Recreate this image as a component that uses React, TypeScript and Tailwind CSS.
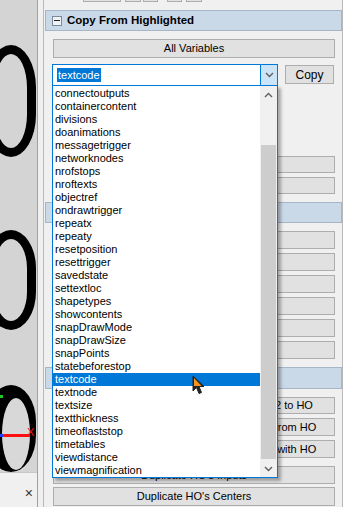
import React from 'react';

const items = [
    'connectoutputs', 'containercontent', 'divisions', 'doanimations', 'messagetrigger',
    'networknodes', 'nrofstops', 'nroftexts', 'objectref', 'ondrawtrigger', 'repeatx',
    'repeaty', 'resetposition', 'resettrigger', 'savedstate', 'settextloc', 'shapetypes',
    'showcontents', 'snapDrawMode', 'snapDrawSize', 'snapPoints', 'statebeforestop',
    'textcode', 'textnode', 'textsize', 'textthickness', 'timeoflaststop', 'timetables',
    'viewdistance', 'viewmagnification',
];

function Btn({ label, className }: { label?: string; className: string }) {
    return (
        <div className={`ml-[9px] mr-[7px] flex items-center justify-center bg-[#e1e1e1] border border-[#adadad] text-black whitespace-nowrap overflow-hidden ${className}`}>
            {label}
        </div>
    );
}

function Header({ title, className }: { title?: string; className: string }) {
    return (
        <div className={`ml-[1px] flex items-center bg-[#cad9e8] border border-[#a7b6c6] ${className}`}>
            <div className="ml-[6px] w-[10px] h-[10px] border border-[#7a8a9a] bg-[#eef3f8] flex items-center justify-center">
                <div className="w-[6px] h-[1px] bg-[#222]" />
            </div>
            {title && <span className="ml-[5px] font-bold text-[11.5px] text-black">{title}</span>}
        </div>
    );
}

function Chevron({ up }: { up?: boolean }) {
    return (
        <svg width="9" height="6" viewBox="0 0 9 6">
            <polyline
                points={up ? '1,5 4.5,1.5 8,5' : '1,1 4.5,4.5 8,1'}
                fill="none"
                stroke="#606060"
                strokeWidth="1.4"
            />
        </svg>
    );
}

export default function App() {
    return (
        <div className="relative w-[343px] h-[507px] overflow-hidden flex bg-[#f0f0f0] font-['Liberation_Sans',Arial,sans-serif] text-[11px]">
            {/* 3d view strip on the left */}
            <div className="w-[38px] flex flex-col border-r border-[#a0a0a0]">
                <div className="relative h-[472px] overflow-hidden bg-[#d4d4d4]">
                    <div className="absolute left-[-14px] top-[45px] w-[50px] h-[112px] border-[9px] border-black rounded-[50%/38%]" />
                    <div className="absolute left-[-14px] top-[230px] w-[50px] h-[100px] border-[9px] border-black rounded-[50%/38%]" />
                    <div className="absolute left-[-14px] top-[385px] w-[50px] h-[87px] bg-black rounded-[50%/42%]" />
                    <div className="absolute left-[2px] top-[398px] w-[28px] h-[72px] bg-[#d8d8d8] rounded-[50%]" />
                    <div className="absolute left-0 top-[395px] w-[3px] h-[3px] bg-[#22cc22]" />
                    <div className="absolute left-0 top-[434px] w-[30px] h-[3px] bg-[#ff1010]" />
                    <div className="absolute left-0 top-[434px] w-[3px] h-[3px] bg-[#2040ff]" />
                    <span className="absolute left-[27px] top-[427px] text-[11px] leading-none text-[#ff1010]">X</span>
                </div>
                <div className="flex-1 border-t border-[#c8c8c8] flex items-end justify-end pb-[7px] pr-[4px]">
                    <span className="text-[14px] leading-none text-[#333]">×</span>
                </div>
            </div>

            {/* property panel */}
            <div className="flex-1 pl-[5px] flex">
                <div className="flex-1 flex flex-col border-l border-r border-[#b9b9b9]">
                    <div className="mt-[-14px] h-[16px] flex">
                        <div className="ml-[39px] w-[38px] border border-[#adadad] bg-[#e1e1e1]" />
                        <div className="ml-[4px] w-[16px] border border-[#adadad] bg-[#e1e1e1]" />
                        <div className="ml-[2px] w-[15px] border border-[#adadad] bg-[#e1e1e1]" />
                        <div className="ml-[9px] w-[15px] border border-[#adadad] bg-[#e1e1e1]" />
                        <div className="ml-[4px] w-[16px] border border-[#adadad] bg-[#e1e1e1]" />
                    </div>

                    <Header title="Copy From Highlighted" className="mt-[8px] h-[21px]" />
                    <Btn label="All Variables" className="mt-[8px] h-[19px]" />

                    <div className="mt-[6px] h-[22px] flex items-start">
                        <div className="ml-[8px] w-[226px] h-[22px] border border-[#0078d7] bg-white flex">
                            <div className="flex-1 flex items-center pl-[4px]">
                                <span className="bg-[#0078d7] text-white px-[1px] leading-[14px]">textcode</span>
                            </div>
                            <div className="w-[17px] bg-[#cce4f7] border-l border-[#0078d7] flex items-center justify-center">
                                <Chevron />
                            </div>
                        </div>
                        <div className="ml-[7px] mt-[1px] w-[49px] h-[19px] border border-[#adadad] bg-[#e1e1e1] flex items-center justify-center text-[12px]">
                            Copy
                        </div>
                    </div>

                    {/* rows hidden under the open list */}
                    <Btn className="mt-[70px] h-[17px]" />
                    <Btn className="mt-[4px] h-[17px]" />

                    <Header className="mt-[8px] h-[21px]" />
                    <Btn className="mt-[8px] h-[18px]" />
                    <Btn className="mt-[4px] h-[18px]" />
                    <Btn className="mt-[4px] h-[18px]" />
                    <Btn className="mt-[4px] h-[18px]" />
                    <Btn className="mt-[4px] h-[18px]" />
                    <Btn className="mt-[4px] h-[18px]" />

                    <Header className="mt-[8px] h-[22px]" />
                    <Btn label="Connect all Highlighted Objects In Order 2 to HO" className="mt-[8px] h-[17px]" />
                    <Btn label="Disconnect all Highlighted Objects Inputs from HO" className="mt-[4px] h-[18px]" />
                    <Btn label="Swap Connections of Highlighted Objects with HO" className="mt-[4px] h-[18px]" />
                    <Btn label="Duplicate HO's Inputs" className="mt-[8px] h-[18px]" />
                    <Btn label="Duplicate HO's Centers" className="mt-[3px] h-[19px]" />
                </div>
            </div>

            {/* open dropdown list */}
            <div className="absolute left-[52px] top-[85px] w-[226px] h-[393px] border border-[#0078d7] bg-white flex shadow-[3px_3px_3px_rgba(0,0,0,0.3)]">
                <div className="flex-1 pt-[1px]">
                    {items.map((it) => (
                        <div
                            key={it}
                            className={`h-[13px] leading-[13px] pl-[2px] text-black ${it === 'textcode' ? 'bg-[#0078d7] text-white' : ''}`}
                        >
                            {it}
                        </div>
                    ))}
                </div>
                <div className="w-[17px] bg-[#f0f0f0] flex flex-col">
                    <div className="h-[17px] flex items-center justify-center">
                        <Chevron up />
                    </div>
                    <div className="flex-1 pt-[42px] pb-[1px] px-[1px] flex flex-col">
                        <div className="flex-1 bg-[#cdcdcd]" />
                    </div>
                    <div className="h-[17px] flex items-center justify-center">
                        <Chevron />
                    </div>
                </div>
            </div>

            {/* mouse cursor */}
            <svg className="absolute left-[192px] top-[375px]" width="14" height="20" viewBox="0 0 14 20">
                <path d="M1 1 L1 16 L4.5 12.5 L7 18.5 L9.5 17.5 L7 11.5 L12 11.5 Z" fill="#222" stroke="#222" strokeWidth="1" />
                <path d="M2 3 L2 11 L9.5 11 Z" fill="#f7941d" />
            </svg>
        </div>
    );
}
